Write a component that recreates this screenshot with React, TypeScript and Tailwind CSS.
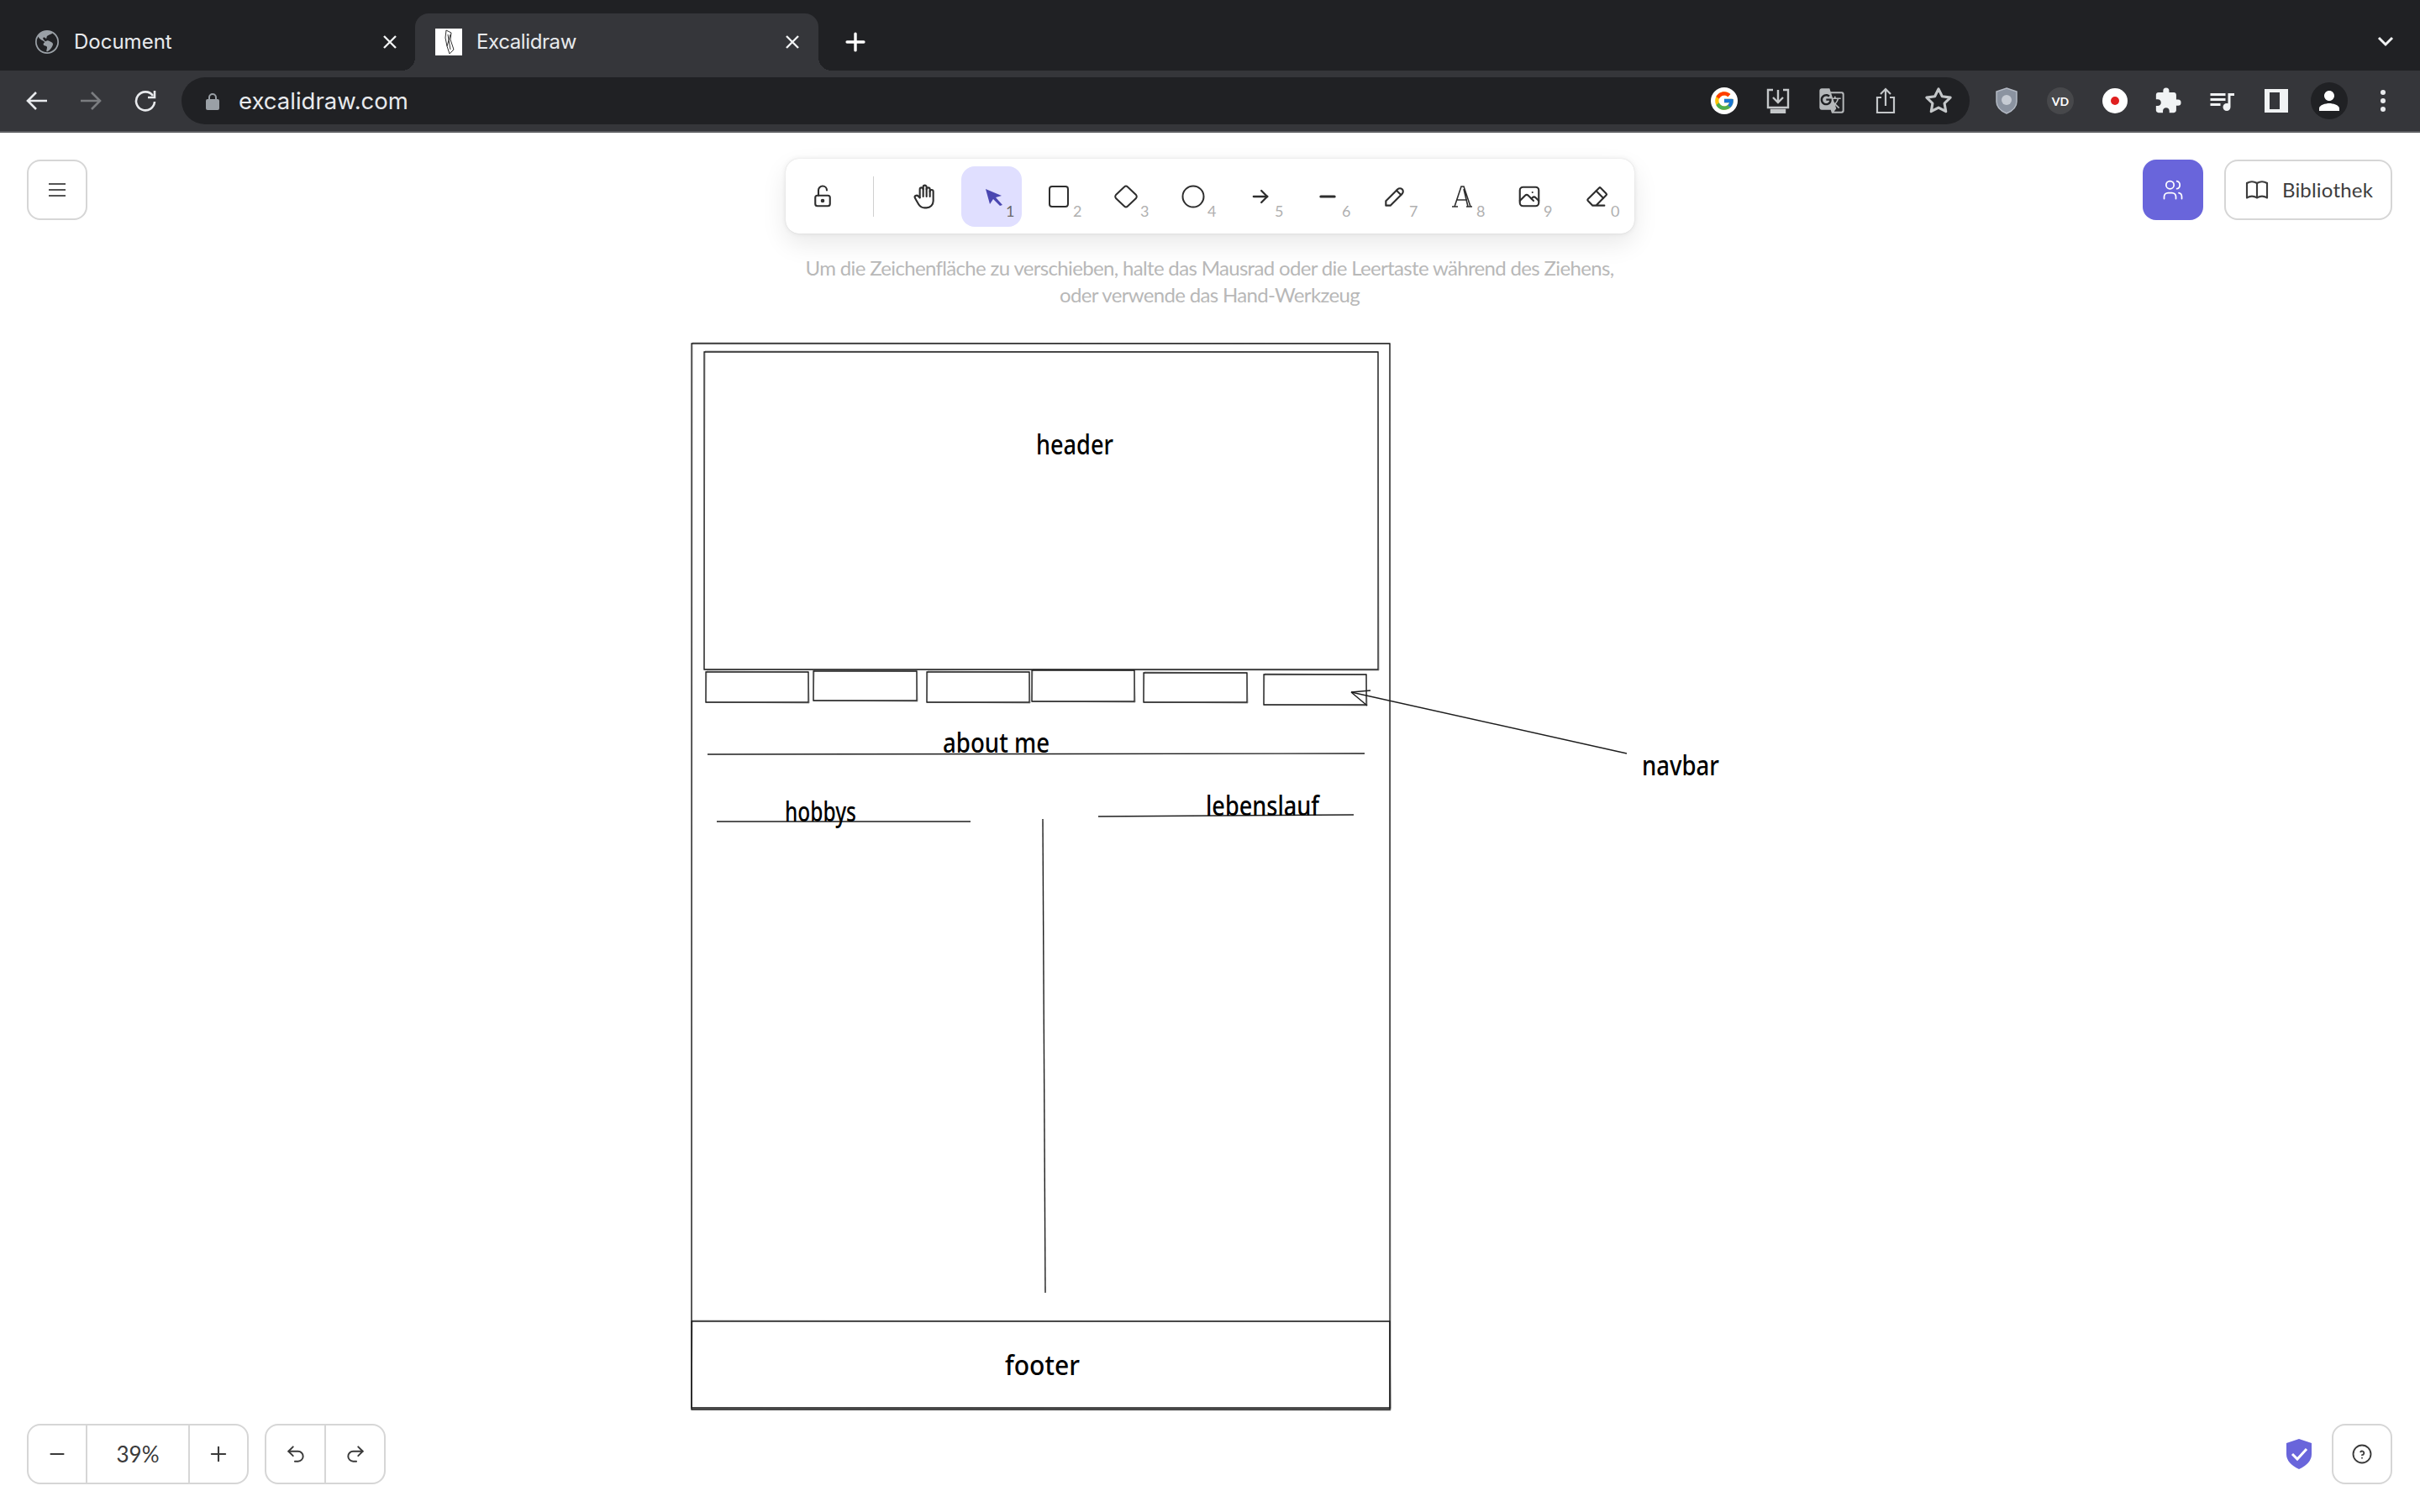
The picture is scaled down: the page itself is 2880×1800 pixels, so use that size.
import React from "react";
import { BsGlobeAmericas } from "react-icons/bs";
import { FcGoogle } from "react-icons/fc";
import { MdExtension, MdGTranslate, MdPerson, MdQueueMusic } from "react-icons/md";
import {
  TbArrowRight,
  TbBook,
  TbEraser,
  TbHandStop,
  TbHelpCircle,
  TbLockOpen,
  TbMinus,
  TbPencil,
  TbPhoto,
  TbPlus,
  TbStar,
  TbUsers,
} from "react-icons/tb";
import { LuRedo2, LuUndo2 } from "react-icons/lu";

const Cursor = () => (
  <svg width="24" height="22" viewBox="0 0 24 22" className="ml-[9px] mt-[2px]">
    <path d="M1 1 L20 9 L13 11 L21 20 L18 21 L10 13 L6 19 Z" fill="#4a47b1" />
  </svg>
);

const RectIcon = () => (
  <svg width="24" height="26" viewBox="0 0 24 26" fill="none" stroke="#2e2e2e" strokeWidth="2">
    <rect x="1" y="1" width="22" height="24" rx="3" />
  </svg>
);

const DiamondIcon = () => (
  <svg width="28" height="28" viewBox="0 0 28 28" fill="none" stroke="#2e2e2e" strokeWidth="2">
    <path d="M12 2.5 Q14 0.5 16 2.5 L26 12 Q27.5 14 26 16 L16 25.5 Q14 27.5 12 25.5 L2 16 Q0.5 14 2 12 Z" />
  </svg>
);

const EllipseIcon = () => (
  <svg width="28" height="28" viewBox="0 0 28 28" fill="none" stroke="#2e2e2e" strokeWidth="2">
    <circle cx="14" cy="14" r="12.5" />
  </svg>
);

const SerifA = () => (
  <svg width="26" height="26" viewBox="0 0 26 26" fill="none" stroke="#2e2e2e" strokeWidth="1.6">
    <path d="M1 25 H8 M4 25 L12 1 H15 L23 25 M18 25 H25 M7 17 H19 M15 4 L20 25" />
  </svg>
);

const tools = [
  { icon: <TbHandStop size={32} color="#2e2e2e" strokeWidth={1.6} />, key: "" },
  { icon: <Cursor />, key: "1", active: true },
  { icon: <RectIcon />, key: "2" },
  { icon: <DiamondIcon />, key: "3" },
  { icon: <EllipseIcon />, key: "4" },
  { icon: <TbArrowRight size={28} color="#2e2e2e" />, key: "5" },
  { icon: <TbMinus size={28} color="#2e2e2e" strokeWidth={2.6} />, key: "6" },
  { icon: <TbPencil size={32} color="#2e2e2e" strokeWidth={1.6} />, key: "7" },
  { icon: <SerifA />, key: "8" },
  { icon: <TbPhoto size={30} color="#2e2e2e" strokeWidth={1.7} />, key: "9" },
  { icon: <TbEraser size={32} color="#2e2e2e" strokeWidth={1.6} />, key: "0" },
];

// sketchy boxes of the drawing: x1, y1, x2, y2
const boxes = [
  [823, 409, 1654, 1678],
  [838, 419, 1640, 797],
  [840, 800, 962, 836],
  [968, 799, 1091, 834],
  [1103, 800, 1225, 836],
  [1228, 798, 1350, 835],
  [1361, 801, 1484, 836],
  [1504, 803, 1626, 839],
  [823, 1573, 1654, 1676],
];

const lines = [
  [842, 898, 1624, 897],
  [853, 978, 1155, 978],
  [1307, 972, 1611, 970],
  [1241, 975, 1244, 1539],
  [1608, 824, 1936, 897],
  [1608, 824, 1631, 822],
  [1608, 824, 1627, 840],
];

const labels = [
  { text: "header", x: 1233, y: 541, w: 92 },
  { text: "about me", x: 1122, y: 896, w: 127 },
  { text: "hobbys", x: 934, y: 978, w: 85 },
  { text: "lebenslauf", x: 1435, y: 971, w: 135 },
  { text: "navbar", x: 1954, y: 923, w: 92 },
  { text: "footer", x: 1196, y: 1637, w: 89 },
];

const Drawing = () => (
  <svg className="absolute inset-0" width="2880" height="1642" viewBox="0 158 2880 1642" fill="none">
    {boxes.map(([a, b, c, d], i) => (
      <g key={i}>
        <path d={`M${a} ${b} L${c} ${b} L${c} ${d} L${a} ${d} Z`} stroke="#1e1e1e" strokeWidth="1.3" />
        <path
          d={`M${a + 1} ${b - 1} L${c} ${b} L${c + 1} ${d + 1} L${a} ${d} Z`}
          stroke="#1e1e1e"
          strokeWidth="1"
          opacity="0.45"
        />
      </g>
    ))}
    {lines.map(([a, b, c, d], i) => (
      <path key={i} d={`M${a} ${b} L${c} ${d}`} stroke="#1e1e1e" strokeWidth="1.4" />
    ))}
    {labels.map((l) => (
      <text
        key={l.text}
        x={l.x}
        y={l.y}
        textLength={l.w}
        lengthAdjust="spacingAndGlyphs"
        fill="#000"
        fontSize="32"
        fontWeight="500"
        fontFamily="'Noto Sans', sans-serif"
      >
        {l.text}
      </text>
    ))}
  </svg>
);

const Tab = ({ active, icon, title }: { active?: boolean; icon: React.ReactNode; title: string }) => (
  <div
    className={`relative flex h-[68px] w-[480px] items-center rounded-t-[16px] ${
      active ? "bg-[#35363a] pl-[24px] pr-[22px]" : "pl-[28px] pr-[21px]"
    }`}
  >
    {active && (
      <>
        <span className="absolute bottom-0 left-[-16px] h-[16px] w-[16px] bg-[radial-gradient(circle_at_0_0,transparent_16px,#35363a_16px)]" />
        <span className="absolute bottom-0 right-[-16px] h-[16px] w-[16px] bg-[radial-gradient(circle_at_100%_0,transparent_16px,#35363a_16px)]" />
      </>
    )}
    {icon}
    <span className={`flex-1 font-['Inter',sans-serif] text-[24px] text-[#e8eaed] ${active ? "ml-[17px] tracking-[-0.4px]" : "ml-[18px]"}`}>
      {title}
    </span>
    <svg width="18" height="18" viewBox="0 0 18 18" stroke="#f1f3f4" strokeWidth="2.4">
      <path d="M2 2 L16 16 M16 2 L2 16" />
    </svg>
  </div>
);

const Favicon = () => (
  <div className="flex h-[32px] w-[32px] items-center justify-center bg-white">
    <svg width="20" height="30" viewBox="0 0 20 30" fill="none" stroke="#333" strokeWidth="1">
      <path d="M7 1 L13 4 L12 12 L16 24 L11 29 L8 20 L6 10 Z M9 6 L12 24 M12 6 L8 20" />
    </svg>
  </div>
);

const BrowserChrome = () => (
  <div className="shrink-0 bg-[#202124]">
    <div className="flex h-[84px] items-end">
      <div className="w-[14px]" />
      <Tab title="Document" icon={<BsGlobeAmericas size={28} color="#9aa0a6" />} />
      <Tab active title="Excalidraw" icon={<Favicon />} />
      <TbPlus size={34} color="#fff" strokeWidth={2.4} className="mb-[17px] ml-[27px]" />
      <svg width="22" height="14" viewBox="0 0 22 14" fill="none" stroke="#f1f3f4" strokeWidth="3" className="mb-[28px] ml-auto mr-[30px]">
        <path d="M3 3 L11 11 L19 3" />
      </svg>
    </div>
    <div className="flex h-[74px] items-start border-b-2 border-[#5c5d60] bg-[#35363a]">
      <div className="flex h-[72px] w-[216px] items-center pl-[31px]">
        <svg width="26" height="26" viewBox="0 0 26 26" fill="none" stroke="#e8eaed" strokeWidth="2.6">
          <path d="M25 13 H3 M12 3 L2 13 L12 23" />
        </svg>
        <svg width="26" height="26" viewBox="0 0 26 26" fill="none" stroke="#7b7d80" strokeWidth="2.6" className="ml-[38px]">
          <path d="M1 13 H23 M14 3 L24 13 L14 23" />
        </svg>
        <svg width="28" height="28" viewBox="0 0 28 28" fill="none" stroke="#e8eaed" strokeWidth="2.6" className="ml-[38px]">
          <path d="M23 8 A11 11 0 1 0 25 15" />
          <path d="M25 2 V10 H17" />
        </svg>
      </div>
      <div className="mt-[8px] flex h-[56px] w-[2128px] items-center rounded-[28px] bg-[#202124]">
        <svg width="18" height="21" viewBox="0 0 18 21" className="ml-[28px]">
          <path d="M5 9 V6 A4 4 0 0 1 13 6 V9" fill="none" stroke="#9aa0a6" strokeWidth="2" />
          <rect x="1" y="8" width="16" height="13" rx="2" fill="#9aa0a6" />
        </svg>
        <span className="ml-[22px] mt-[1px] font-['Inter',sans-serif] text-[27.5px] text-[#e8eaed]">excalidraw.com</span>
        <div className="ml-auto flex items-center">
          <span className="flex h-[32px] w-[32px] items-center justify-center rounded-full bg-white">
            <FcGoogle size={26} />
          </span>
          <svg width="28" height="30" viewBox="0 0 28 30" fill="none" stroke="#c4c7c9" strokeWidth="2.4" className="ml-[34px]">
            <path d="M8 2 H2 V23 H26 V2 H20 M14 2 V16 M8 11 L14 17 L20 11" />
            <path d="M6 26 H22 V29 H6 Z" fill="#c4c7c9" />
          </svg>
          <MdGTranslate size={32} color="#b5b8ba" className="ml-[34px]" />
          <svg width="24" height="32" viewBox="0 0 24 32" fill="none" stroke="#c4c7c9" strokeWidth="2.2" className="ml-[36px]">
            <path d="M7 12 H2 V30 H22 V12 H17 M12 22 V2 M6 8 L12 2 L18 8" />
          </svg>
          <TbStar size={34} color="#c4c7c9" strokeWidth={2.2} className="ml-[34px] mr-[20px]" />
        </div>
      </div>
      <div className="mt-[18px] flex items-center">
        <svg width="26" height="32" viewBox="0 0 26 32" className="ml-[31px]">
          <path d="M13 1 L25 5 V17 Q25 26 13 31 Q1 26 1 17 V5 Z" fill="#8b93a0" stroke="#b4bac4" strokeWidth="1.5" />
          <circle cx="13" cy="15" r="6" fill="#c6cbd3" />
        </svg>
        <span className="ml-[35px] flex h-[32px] w-[32px] items-center justify-center rounded-full bg-[#47484b] text-[14px] font-bold text-white">
          VD
        </span>
        <span className="ml-[34px] flex h-[30px] w-[30px] items-center justify-center rounded-full bg-white">
          <span className="h-[10px] w-[10px] rounded-full bg-[#e02020]" />
        </span>
        <MdExtension size={34} color="#f1f3f4" className="ml-[31px]" />
        <MdQueueMusic size={36} color="#f1f3f4" className="ml-[29px]" />
        <span className="ml-[33px] flex h-[28px] w-[28px] items-center justify-center bg-[#f1f3f4]">
          <span className="ml-[-5px] h-[20px] w-[12px] bg-[#35363a]" />
        </span>
        <span className="ml-[27px] mt-[-10px] mb-[-10px] flex h-[44px] w-[44px] items-center justify-center rounded-full bg-[#202124]">
          <MdPerson size={36} color="#fff" />
        </span>
        <span className="ml-[39px] flex flex-col gap-[4px]">
          <span className="h-[6px] w-[6px] rounded-full bg-[#e8eaed]" />
          <span className="h-[6px] w-[6px] rounded-full bg-[#e8eaed]" />
          <span className="h-[6px] w-[6px] rounded-full bg-[#e8eaed]" />
        </span>
      </div>
    </div>
  </div>
);

const Toolbar = () => (
  <div className="flex flex-col items-center">
    <div className="mt-[-1px] flex h-[89px] w-[1010px] items-center rounded-[16px] bg-white px-[8px] shadow-[0_0_1px_rgba(0,0,0,0.17),0_0_6px_rgba(0,0,0,0.08),0_12px_30px_rgba(0,0,0,0.09)]">
      <div className="flex h-[72px] w-[72px] items-center justify-center">
        <TbLockOpen size={30} color="#2e2e2e" strokeWidth={1.7} />
      </div>
      <div className="ml-[24px] mr-[24px] h-[48px] w-px bg-[#d0d0d0]" />
      <div className="flex gap-[8px]">
        {tools.map((t, i) => (
          <div
            key={i}
            className={`relative flex h-[72px] w-[72px] items-center justify-center rounded-[16px] ${
              t.active ? "bg-[#e0dfff]" : ""
            }`}
          >
            {t.icon}
            <span
              className={`absolute bottom-[9px] right-[8px] text-[18px] leading-[20px] ${
                t.active ? "text-[#6a6a6a]" : "text-[#b0b0b0]"
              }`}
            >
              {t.key}
            </span>
          </div>
        ))}
      </div>
    </div>
    <p className="mt-[25px] w-[1100px] text-center text-[24px] leading-[32px] tracking-[-0.66px] text-[#b8b8b8]">
      Um die Zeichenfläche zu verschieben, halte das Mausrad oder die Leertaste während des Ziehens,
      <br />
      oder verwende das Hand-Werkzeug
    </p>
  </div>
);

export default function App() {
  return (
    <div className="flex h-[1800px] w-[2880px] flex-col overflow-hidden bg-white font-['Lato',sans-serif]">
      <BrowserChrome />
      <main className="relative flex-1">
        <Drawing />
        <div className="relative flex h-full flex-col justify-between pb-[33px] pl-[32px] pr-[33px] pt-[32px]">
          <div className="grid grid-cols-[1fr_auto_1fr] items-start">
            <div className="flex h-[72px] w-[72px] flex-col items-center justify-center gap-[5px] rounded-[16px] border-2 border-[#d6d6d6] bg-white">
              <span className="h-[2px] w-[20px] bg-[#555]" />
              <span className="h-[2px] w-[20px] bg-[#555]" />
              <span className="h-[2px] w-[20px] bg-[#555]" />
            </div>
            <Toolbar />
            <div className="flex items-center justify-end gap-[25px]">
              <div className="flex h-[72px] w-[72px] items-center justify-center rounded-[16px] bg-[#6965db]">
                <TbUsers size={28} color="#fff" strokeWidth={1.5} />
              </div>
              <div className="flex h-[72px] w-[200px] items-center justify-center gap-[14px] rounded-[16px] border-2 border-[#d6d6d6] bg-white text-[24px] tracking-[0.2px] text-[#3d3d3d]">
                <TbBook size={32} color="#3d3d3d" strokeWidth={1.6} />
                Bibliothek
              </div>
            </div>
          </div>
          <div className="flex items-center">
            <div className="flex h-[72px] items-stretch rounded-[16px] border-2 border-[#d6d6d6] bg-white text-[#3a3a3a]">
              <div className="flex w-[70px] items-center justify-center border-r-2 border-[#d6d6d6]">
                <TbMinus size={26} strokeWidth={1.8} />
              </div>
              <div className="flex w-[122px] items-center justify-center border-r-2 border-[#d6d6d6] text-[26px]">39%</div>
              <div className="flex w-[68px] items-center justify-center">
                <TbPlus size={28} strokeWidth={1.8} />
              </div>
            </div>
            <div className="ml-[19px] flex h-[72px] items-stretch rounded-[16px] border-2 border-[#d6d6d6] bg-white text-[#3a3a3a]">
              <div className="flex w-[71px] items-center justify-center border-r-2 border-[#d6d6d6]">
                <LuUndo2 size={26} strokeWidth={1.8} />
              </div>
              <div className="flex w-[69px] items-center justify-center">
                <LuRedo2 size={26} strokeWidth={1.8} />
              </div>
            </div>
            <svg width="30" height="36" viewBox="0 0 30 36" className="ml-auto mr-[24px]">
              <path d="M15 0 L30 5 V18 Q30 29 15 36 Q0 29 0 18 V5 Z" fill="#6965db" />
              <path d="M7 18 L13 24 L24 12" fill="none" stroke="#fff" strokeWidth="3" />
            </svg>
            <div className="flex h-[72px] w-[72px] items-center justify-center rounded-[16px] border-2 border-[#d6d6d6] bg-white">
              <TbHelpCircle size={28} color="#3a3a3a" strokeWidth={1.6} />
            </div>
          </div>
        </div>
      </main>
    </div>
  );
}
